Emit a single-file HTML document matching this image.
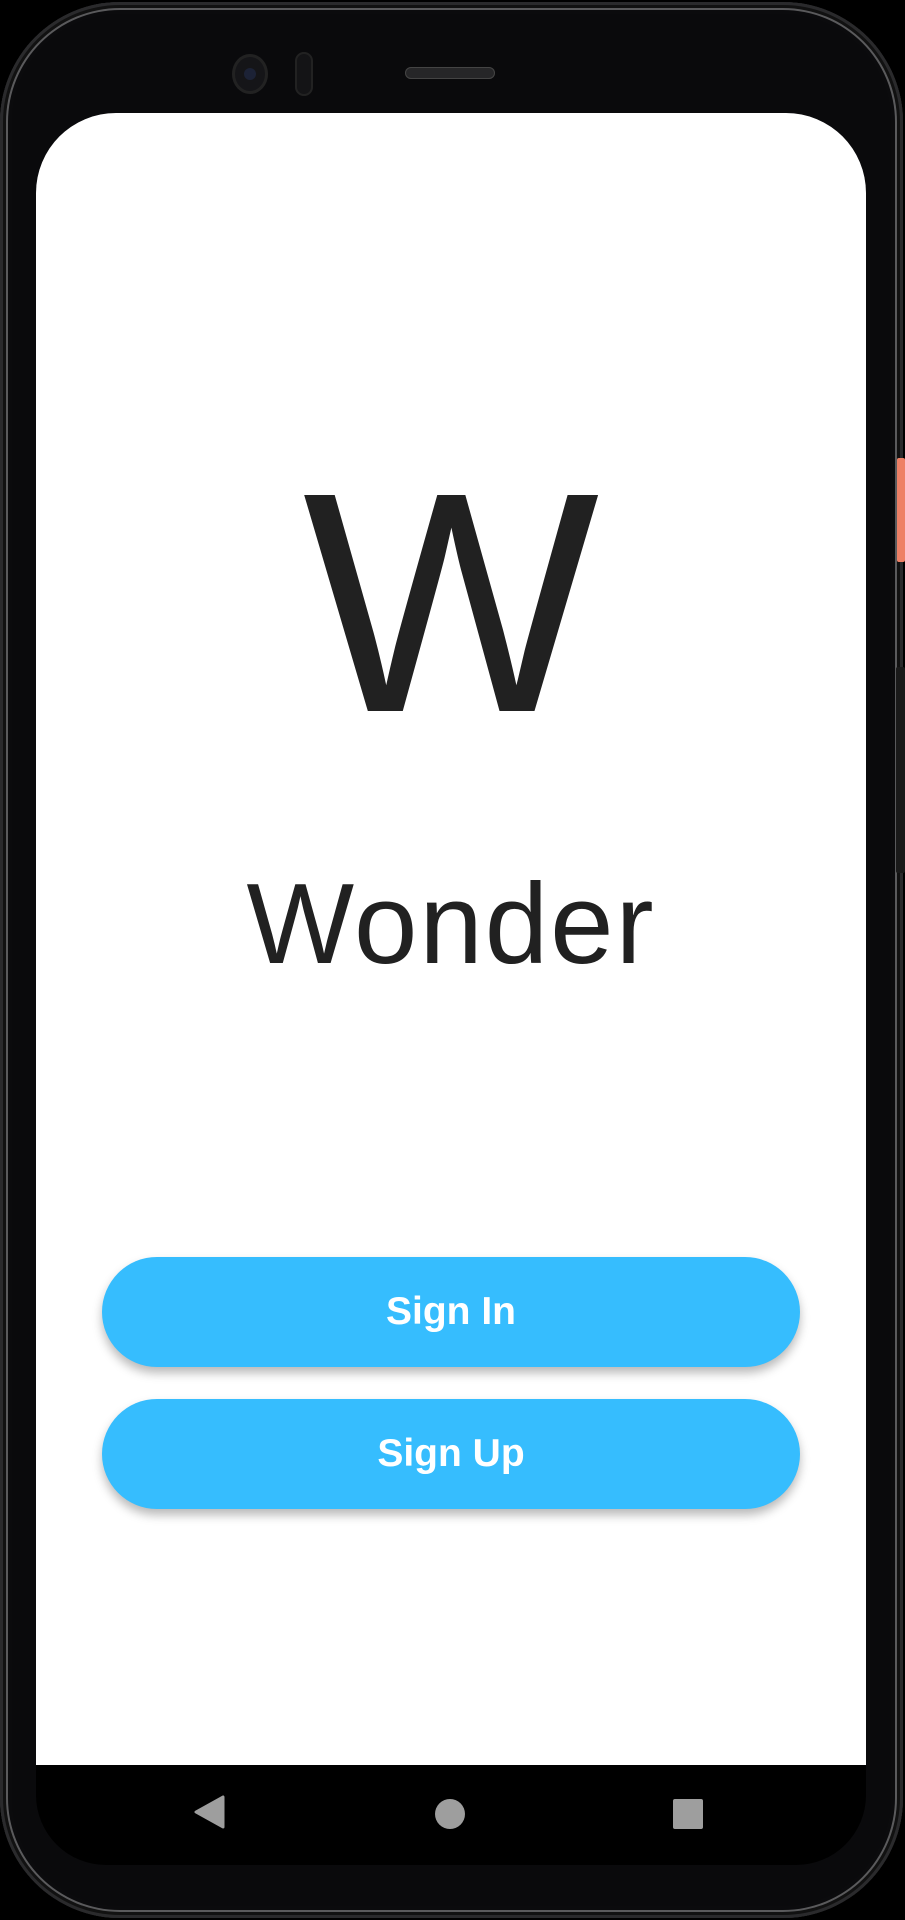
<!DOCTYPE html>
<html><head><meta charset="utf-8"><style>
html,body{margin:0;padding:0;background:#000;}
body{width:905px;height:1920px;position:relative;overflow:hidden;font-family:"Liberation Sans",sans-serif;}
.phone{position:absolute;left:0;top:2px;width:903px;height:1916px;border-radius:120px;background:#0a0a0c;box-shadow:inset 0 0 0 3px #2a2a2c,inset 0 0 0 6px #111,inset 0 0 0 8px #5a5a5c,inset 0 0 0 12px #0b0b0d;}
.screen{position:absolute;left:36px;top:113px;width:830px;height:1752px;background:#000;border-radius:80px 80px 70px 70px;overflow:hidden;}
.white{position:absolute;left:0;top:0;width:830px;height:1652px;background:#fff;}
.W{position:absolute;left:0;width:830px;top:333px;text-align:center;font-size:314px;line-height:1;color:#212121;}
.wonder{position:absolute;left:0;width:830px;top:755px;text-align:center;font-size:114px;line-height:1;color:#212121;letter-spacing:2px;}
.btn{position:absolute;left:66px;width:698px;height:110px;border-radius:55px;background:#36bdfe;color:#fff;font-weight:bold;font-size:39px;text-align:center;line-height:110px;box-shadow:0 6px 10px rgba(0,0,0,0.28);}
.cam{position:absolute;left:232px;top:54px;width:36px;height:40px;border-radius:50%;background:#151518;box-shadow:inset 0 0 0 3px #222;}
.cam:after{content:"";position:absolute;left:12px;top:14px;width:12px;height:12px;border-radius:50%;background:#1c2236;}
.sens{position:absolute;left:295px;top:52px;width:18px;height:44px;border-radius:9px;background:#141416;box-shadow:inset 0 0 0 2px #222;}
.spk{position:absolute;left:405px;top:67px;width:90px;height:12px;border-radius:6px;background:#262628;box-shadow:inset 0 0 0 1px #444;}
</style></head><body>
<div class="phone"></div>
<div style="position:absolute;left:897px;top:458px;width:8px;height:104px;background:#ee8066;border-radius:2px"></div>
<div style="position:absolute;left:896px;top:667px;width:9px;height:206px;background:#1a1a1a;border-radius:2px"></div>
<div class="cam"></div><div class="sens"></div><div class="spk"></div>
<div class="screen">
 <div class="white">
  <div class="W">W</div>
  <div class="wonder">Wonder</div>
  <div class="btn" style="top:1144px">Sign In</div>
  <div class="btn" style="top:1286px">Sign Up</div>
 </div>
 <svg style="position:absolute;left:0;top:1652px" width="830" height="100">
  <path d="M187 32 L187 62 L160 47 Z" fill="#9e9e9e" stroke="#9e9e9e" stroke-width="3" stroke-linejoin="round"/>
  <circle cx="414" cy="49" r="15" fill="#9e9e9e"/>
  <rect x="637" y="34" width="30" height="30" rx="2" fill="#9e9e9e"/>
 </svg>
</div>
</body></html>
